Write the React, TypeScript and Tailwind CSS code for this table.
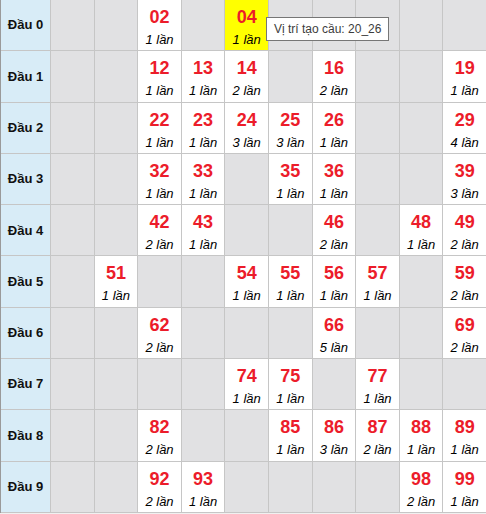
import React from "react";

type Hit = { n: string; c: number; hl?: boolean };

// rows of "Đầu" 0..9, each maps column digit -> hit
const data: Record<number, Hit>[] = [
  { 2: { n: "02", c: 1 }, 4: { n: "04", c: 1, hl: true } },
  { 2: { n: "12", c: 1 }, 3: { n: "13", c: 1 }, 4: { n: "14", c: 2 }, 6: { n: "16", c: 2 }, 9: { n: "19", c: 1 } },
  { 2: { n: "22", c: 1 }, 3: { n: "23", c: 1 }, 4: { n: "24", c: 3 }, 5: { n: "25", c: 3 }, 6: { n: "26", c: 1 }, 9: { n: "29", c: 4 } },
  { 2: { n: "32", c: 1 }, 3: { n: "33", c: 1 }, 5: { n: "35", c: 1 }, 6: { n: "36", c: 1 }, 9: { n: "39", c: 3 } },
  { 2: { n: "42", c: 2 }, 3: { n: "43", c: 1 }, 6: { n: "46", c: 2 }, 8: { n: "48", c: 1 }, 9: { n: "49", c: 2 } },
  { 1: { n: "51", c: 1 }, 4: { n: "54", c: 1 }, 5: { n: "55", c: 1 }, 6: { n: "56", c: 1 }, 7: { n: "57", c: 1 }, 9: { n: "59", c: 2 } },
  { 2: { n: "62", c: 2 }, 6: { n: "66", c: 5 }, 9: { n: "69", c: 2 } },
  { 4: { n: "74", c: 1 }, 5: { n: "75", c: 1 }, 7: { n: "77", c: 1 } },
  { 2: { n: "82", c: 2 }, 5: { n: "85", c: 1 }, 6: { n: "86", c: 3 }, 7: { n: "87", c: 2 }, 8: { n: "88", c: 1 }, 9: { n: "89", c: 1 } },
  { 2: { n: "92", c: 2 }, 3: { n: "93", c: 1 }, 8: { n: "98", c: 2 }, 9: { n: "99", c: 1 } },
];

const cols = [0, 1, 2, 3, 4, 5, 6, 7, 8, 9];

export default function App() {
  return (
    <div className="relative w-[486px] h-[514px] bg-[#f0f0f0] font-['Liberation_Sans',Arial,sans-serif]">
      <div className="grid grid-cols-[49px_repeat(10,1fr)] auto-rows-fr gap-px h-[513px] bg-[#c6c6c6] border-l border-[#9a9a9a] pb-px">
        {data.map((row, r) => (
          <React.Fragment key={r}>
            {/* row header */}
            <div className="bg-[#d8ecf7] flex items-center justify-center text-[13px] font-bold text-[#111]">
              Đầu {r}
            </div>
            {cols.map((c) => {
              const hit = row[c];
              if (!hit) return <div key={c} className="bg-[#e1e1e3]" />;
              return (
                <div
                  key={c}
                  className={`${hit.hl ? "bg-[#ffff00]" : "bg-white"} flex flex-col items-center pt-[6px]`}
                >
                  <span className="text-[18px] leading-[22px] font-bold text-[#ec1c2a]">{hit.n}</span>
                  <span className="mt-[4px] text-[13px] leading-[16px] italic text-black">{hit.c} lần</span>
                </div>
              );
            })}
          </React.Fragment>
        ))}
      </div>

      {/* hover tooltip */}
      <div className="absolute left-[266px] top-[17px] h-[24px] px-[7px] flex items-center bg-white border border-[#767676] text-[12px] text-[#3c3c3c] whitespace-nowrap">
        Vị trí tạo cầu: 20_26
      </div>
    </div>
  );
}
